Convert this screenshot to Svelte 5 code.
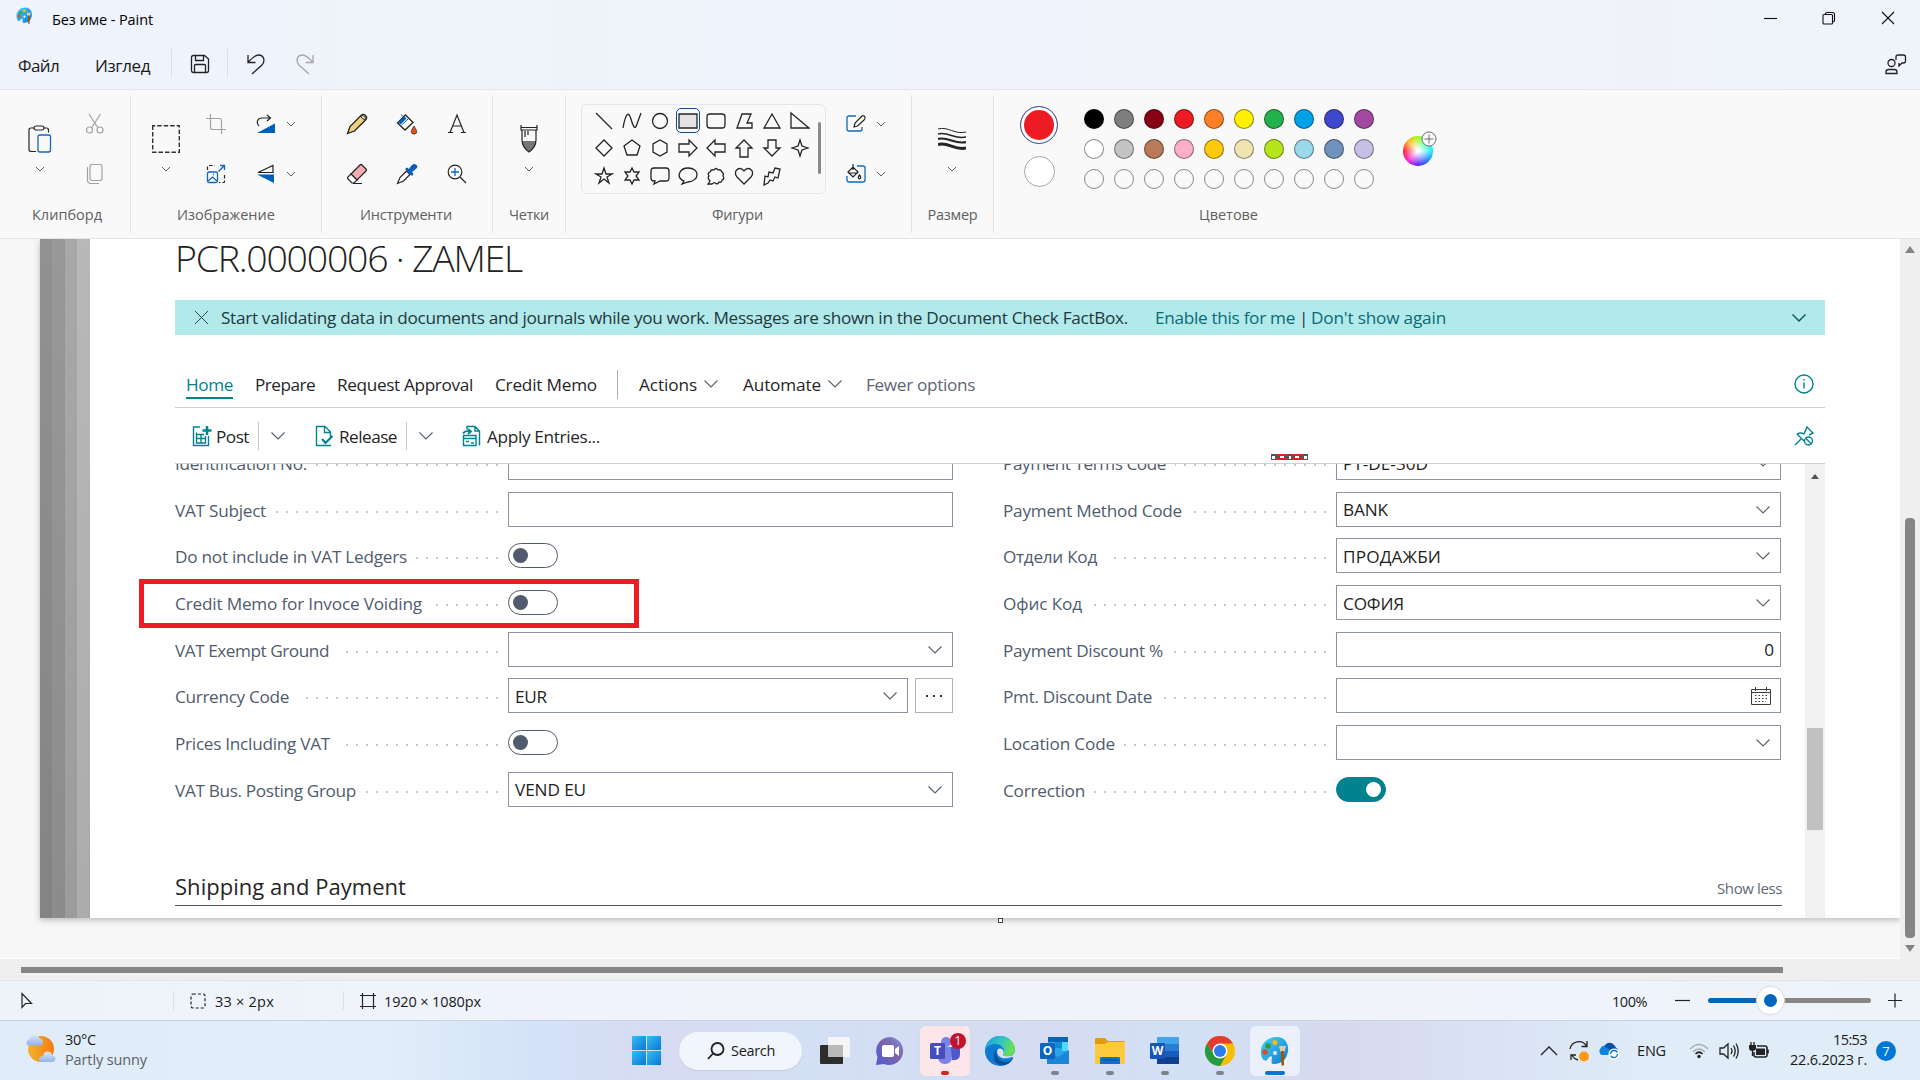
<script>
  // Spreads the letters of a text so that it takes the given width.
  function fit(node, width) {
    if (!width) return;
    const natural = node.getBoundingClientRect().width;
    node.style.letterSpacing = (width - natural) / node.textContent.length + 'px';
  }

  const shapes = [
    'M-8-8L8 8', 'M-9 7C-6-10-3-9-1-2S3 10 5 3L9-8', 'M0-7.5A7.5 7.5 0 1 1 0 7.5A7.5 7.5 0 1 1 0-7.5Z', 'M-9-7H9V7H-9Z',
    'M-6-7H6Q9-7 9-4V4Q9 7 6 7H-6Q-9 7-9 4V-4Q-9-7-6-7Z', 'M-7 7L-2-7H7L3 2H8V7Z', 'M0-7L8 7H-8Z', 'M-9-8L9 7H-9Z',
    'M0-8L8 0L0 8L-8 0Z', 'M0-8L8-2L5 7H-5L-8-2Z', 'M0-8L7-4V4L0 8L-7 4V-4Z', 'M-9-4H1V-8L9 0L1 8V4H-9Z',
    'M9-4H-1V-8L-9 0L-1 8V4H9Z', 'M-4 9V0H-8L0-8L8 0H4V9Z', 'M-4-8V0H-8L0 8L8 0H4V-8Z', 'M0-8L2-2L8 0L2 2L0 8L-2 2L-8 0L-2-2Z',
    'M0-8L2-2H8L3 1L5 7L0 3L-5 7L-3 1L-8-2H-2Z', 'M0-8L2-4H7L4 0L7 4H2L0 8L-2 4H-7L-4 0L-7-4H-2Z',
    'M-6-8H6Q9-8 9-5V2Q9 5 6 5H0L-6 8L-5 5H-6Q-9 5-9 2V-5Q-9-8-6-8Z', 'M-4 5C-13 1-8-8 0-8C12-8 12 5 0 6L-6 8Z',
    'M-6 5L-8 8H-4Q-2 6-1 7Q2 9 3 6Q6 7 6 4Q9 3 7 0Q8-3 6-4Q5-7 2-6Q0-9-2-6Q-5-7-6-4Q-9-3-7 0Q-9 2-6 5Z', 'M0 8L-7 1C-12-5-4-11 0-5C4-11 12-5 7 1Z',
    'M-8 9L-7 0L-4 1L-3-4L1-3L3-8L8-7L6 2L3 1L1 5L-2 4L-4 7Z'
  ];

  const swatches = [
    '#000000', '#7f7f7f', '#880015', '#ed1c24', '#ff7f27', '#fff200', '#22b14c', '#00a2e8', '#3f48cc', '#a349a4',
    '#ffffff', '#c3c3c3', '#b97a57', '#ffaec9', '#ffc90e', '#efe4b0', '#b5e61d', '#99d9ea', '#7092be', '#c8bfe7',
    '', '', '', '', '', '', '', '', '', ''
  ];

  const left = [
    { label: 'Identification No.', w: 132, kind: 'input' },
    { label: 'VAT Subject', w: 91, kind: 'input' },
    { label: 'Do not include in VAT Ledgers', w: 232, kind: 'off' },
    { label: 'Credit Memo for Invoce Voiding', w: 247, kind: 'off' },
    { label: 'VAT Exempt Ground', w: 154, kind: 'select' },
    { label: 'Currency Code', w: 114, kind: 'select', value: 'EUR', vw: 32, more: true },
    { label: 'Prices Including VAT', w: 155, kind: 'off' },
    { label: 'VAT Bus. Posting Group', w: 181, kind: 'select', value: 'VEND EU', vw: 71 }
  ];
  const right = [
    { label: 'Payment Terms Code', w: 163, kind: 'select', value: 'PT-DE-30D', vw: 85 },
    { label: 'Payment Method Code', w: 179, kind: 'select', value: 'BANK', vw: 45 },
    { label: 'Отдели Код', w: 94, kind: 'select', value: 'ПРОДАЖБИ', vw: 98 },
    { label: 'Офис Код', w: 79, kind: 'select', value: 'СОФИЯ', vw: 61 },
    { label: 'Payment Discount %', w: 160, kind: 'number', value: '0' },
    { label: 'Pmt. Discount Date', w: 149, kind: 'date' },
    { label: 'Location Code', w: 112, kind: 'select' },
    { label: 'Correction', w: 82, kind: 'on' }
  ];
</script>

{#snippet t(text, width)}<span class="t" use:fit={width}>{text}</span>{/snippet}

{#snippet chev(cls = '')}
  <svg class="chev {cls}" width="16" height="10" viewBox="0 0 16 10"><path d="M1.5 1.5L8 8L14.5 1.5" /></svg>
{/snippet}

{#snippet tiny()}
  <svg class="tiny" width="10" height="6" viewBox="0 0 10 6"><path d="M1 1L5 5L9 1" /></svg>
{/snippet}

{#snippet paint(size)}
  <svg width={size} height={size} viewBox="0 0 30 30">
    <defs><linearGradient id="pal" x1="0" y1="0" x2="1" y2="1"><stop offset="0" stop-color="#45d4fb" /><stop offset="1" stop-color="#0b78cf" /></linearGradient></defs>
    <path d="M1 17C0 7 8 1 17 1C25 1 29 8 28 15C27 23 22 28 14 28C10 28 12 24 12 21C11 19 9 21 7 24C4 26 1 22 1 17Z" fill="url(#pal)" />
    <circle cx="5" cy="16" r="2.7" fill="#dd4b20" /><circle cx="8" cy="10" r="2.7" fill="#2d9f30" /><circle cx="15" cy="6.500" r="2.600" fill="#f7b90a" /><circle cx="15" cy="17" r="2" fill="#e5f6fd" />
    <path d="M19 10H26L24.500 16H20.500Z" fill="#e3c9a5" stroke="none" /><path d="M21 15H24V29.500H21.500Z" fill="#9e560d" stroke="none" />
  </svg>
{/snippet}

{#snippet field(row)}
  <div class="row">
    <div class="label">{@render t(row.label, row.w)}<i class="dots"></i></div>
    <div class="control">
      {#if row.kind === 'off' || row.kind === 'on'}
        <span class="toggle {row.kind}"><b></b></span>
      {:else}
        <div class="box {row.kind}">
          {#if row.value}{@render t(row.value, row.vw)}{:else}<span></span>{/if}
          {#if row.kind === 'select'}{@render chev()}{/if}
          {#if row.kind === 'date'}
            <svg class="cal" width="20" height="20" viewBox="0 0 20 20"><path d="M.5 3.500H19.500V18.500H.5ZM.5 6.500H19.500M4.500 1V5M15.500 1V5" /><path d="M4 9.500H17M4 12.500H17M4 15.500H15" stroke-dasharray="1.500 2" /></svg>
          {/if}
        </div>
        {#if row.more}<div class="more"><i></i><i></i><i></i></div>{/if}
      {/if}
    </div>
  </div>
{/snippet}

<div class="screen">
  <header>
    <div class="titlebar">
      <span class="logo">{@render paint(17)}</span>
      <span class="title">{@render t('Без име - Paint', 101)}</span>
      <div class="wm">
        <svg width="14" height="14" viewBox="0 0 14 14"><path d="M1 7.500H14" /></svg>
        <svg width="14" height="14" viewBox="0 0 14 14"><path d="M1 4.500Q1 3.500 2 3.500H9.500Q10.500 3.500 10.500 4.500V12Q10.500 13 9.500 13H2Q1 13 1 12ZM3.500 3.500V2.500Q3.500 1.500 5 1.500H10.500Q12.500 1.500 12.500 3.500V9.500Q12.500 11 10.500 11" /></svg>
        <svg width="14" height="14" viewBox="0 0 14 14"><path d="M1 1L13 13M13 1L1 13" /></svg>
      </div>
    </div>
    <div class="menubar">
      <span class="m1">{@render t('Файл', 41)}</span>
      <span class="m2">{@render t('Изглед', 55)}</span>
      <i class="sep s1"></i>
      <svg width="20" height="20" viewBox="0 0 20 20"><path d="M3.500 1.500H14.500L18.500 5V16.500Q18.500 18.500 16.500 18.500H3.500Q1.500 18.500 1.500 16.500V3.500Q1.500 1.500 3.500 1.500ZM5.500 1.500V6.500H13.500V1.500M4.500 18V11.500Q4.500 10.500 5.500 10.500H14.500Q15.500 10.500 15.500 11.500V18" /></svg>
      <i class="sep s2"></i>
      <svg class="undo" width="20" height="22" viewBox="0 0 20 22"><path d="M2 2V9.500H9.500M2.500 9C6 5 9 2 12.500 2C18 2 19.500 8 16 12L6 21" /></svg>
      <svg class="redo" width="20" height="22" viewBox="0 0 20 22"><path d="M18 2V9.500H10.500M17.500 9C14 5 11 2 7.500 2C2 2 .500 8 4 12L14 21" /></svg>
      <svg class="share" width="22" height="22" viewBox="0 0 22 22"><circle cx="6.500" cy="10" r="3.500" /><path d="M1 20.500V19Q1 16.500 3.500 16.500H9.500Q12 16.500 12 19V20.500ZM11 7V4Q11 2 13 2H18.500Q20.500 2 20.500 4V8Q20.500 10 18.500 10H17L14 13V10" /></svg>
    </div>
  </header>

  <section class="ribbon">
    <div class="group g-clip">
      <div class="tools">
        <div class="tall">
          <svg width="24" height="28" viewBox="0 0 24 28"><path class="ink" d="M8 26.500H3Q1 26.500 1 24.500V5Q1 3 3 3H6M16 3H18.500Q20.500 3 20.500 5V7.500" /><rect class="ink" x="6" y="1" width="10" height="4" rx="2" /><rect class="blue" x="10" y="10" width="12.500" height="17" rx="2" /></svg>
          {@render tiny()}
        </div>
        <div class="grid one">
          <svg class="gray" width="20" height="20" viewBox="0 0 20 20"><circle cx="4.500" cy="16" r="3" /><circle cx="15" cy="16" r="3" /><path d="M4 0L13 14M15.500 0L6.500 14" /></svg>
          <svg class="gray" width="20" height="20" viewBox="0 0 20 20"><rect x="5" y=".500" width="12" height="16" rx="2" /><path d="M2.500 3V16Q2.500 19.500 6 19.500H14" /></svg>
        </div>
      </div>
      <div class="caption">{@render t('Клипборд', 70)}</div>
    </div>
    <div class="group g-image">
      <div class="tools">
        <div class="tall">
          <svg width="28" height="28" viewBox="0 0 28 28"><rect x=".7" y=".7" width="26.600" height="26.600" fill="none" stroke="#333" stroke-width="1.400" stroke-dasharray="4.500 2" stroke-dashoffset="2" /></svg>
          {@render tiny()}
        </div>
        <div class="grid one">
          <svg class="gray" width="20" height="20" viewBox="0 0 20 20"><path d="M4.500 0V13.500Q4.500 15.500 6.500 15.500H20M0 4.500H13.500Q15.500 4.500 15.500 6.500V20" /></svg>
          <svg width="20" height="20" viewBox="0 0 20 20"><path class="ink" d="M1.500 6V2.500Q1.500 1.500 2.500 1.500H9M18.500 11V17.500Q18.500 18.500 17.500 18.500H13" stroke-dasharray="3.500 2" /><rect class="blue" x="1.500" y="8" width="10" height="10.500" rx="1.500" /><path class="blue" d="M2 17L6.500 13L11 17M7 10.500H8M12.500 7.500L18.500 1.500M14 1.500H18.500V6" /></svg>
        </div>
        <div class="grid rot">
          <svg width="20" height="20" viewBox="0 0 20 20"><path class="ink" d="M3 12C0 9 1 4 6 4H14M11 1L14.500 4L11 7" /><path d="M1 19L19 9.500V19Z" fill="#005fb8" /></svg>{@render tiny()}
          <svg width="20" height="20" viewBox="0 0 20 20"><path class="ink" d="M2 8.500L17 1.500V8.500Z" /><path d="M1 10.500H18V19Z" fill="#005fb8" /></svg>{@render tiny()}
        </div>
      </div>
      <div class="caption">{@render t('Изображение', 98)}</div>
    </div>
    <div class="group g-tools">
      <div class="tools">
        <div class="grid three">
          <svg width="22" height="22" viewBox="0 0 22 22"><path d="M1.500 20.500L4 13.500L15.500 2Q17.500 .500 19.500 2.500T20 6.500L8.500 18Z" fill="#f2cf7c" stroke="#222" stroke-width="1.300" /><path d="M14.500 3.500L17 2.500L19.500 5L18.500 7Z" fill="#fff" stroke="#222" /></svg>
          <svg width="22" height="22" viewBox="0 0 22 22"><path d="M1.500 10L9.500 2L17 9.500L9 17Z" fill="#fff" stroke="#222" stroke-width="1.300" /><path d="M2 9L8 3L10.500 5.500L4.500 11.500Z" fill="#005fb8" /><path d="M5.500 12L12 6M5 1.500L9 5" stroke="#005fb8" fill="none" /><path d="M18 13Q14.500 18 15.500 20Q18 22.500 20.500 20Q21.500 18 18 13Z" fill="#e8511f" stroke="#222" stroke-width=".700" /></svg>
          <svg width="22" height="22" viewBox="0 0 22 22"><path class="ink" d="M4 19.500L11 2L18 19.500M6.500 13H15.500M2 19.500H7M15 19.500H20" stroke-width="1.600" /></svg>
          <svg width="22" height="22" viewBox="0 0 22 22"><path d="M5 11L14 2Q15 1 16 2L20 6Q21 7 20 8L11 17Z" fill="#f8aeb0" stroke="#222" stroke-width="1.200" /><path d="M5 11L2 14Q1 15 2 16L6 20H8L11 17ZM7 20.500H16" fill="#fff" stroke="#222" stroke-width="1.200" /></svg>
          <svg width="22" height="22" viewBox="0 0 22 22"><path d="M10.500 8L4 14.500L1.500 20.500L7.500 18L14 11.500Z" fill="#fff" stroke="#222" stroke-width="1.200" /><path d="M9 6L11 4.500L13 6L15 3Q18-.500 20.500 2T18.500 7L16 9L17.500 11L16 13Z" fill="#005fb8" /></svg>
          <svg width="22" height="22" viewBox="0 0 22 22"><circle class="ink" cx="9" cy="9" r="6.800" /><path class="ink" d="M14 14L20 20" /><path class="blue" d="M9 5V13M5 9H13" /></svg>
        </div>
      </div>
      <div class="caption">{@render t('Инструменти', 92)}</div>
    </div>
    <div class="group g-brush">
      <div class="tools">
        <div class="tall">
          <svg width="18" height="28" viewBox="0 0 18 28"><path d="M2 16L16 16Q16 22 9 27Q2 22 2 16Z" fill="#777" /><path class="ink" d="M1 0V5H17V0M1 2.500H17M2 5V15Q2 22 9 27Q16 22 16 15V5M5 6V12M8 6V10" /></svg>
          {@render tiny()}
        </div>
      </div>
      <div class="caption">{@render t('Четки', 40)}</div>
    </div>
    <div class="group g-shapes">
      <div class="tools">
        <div class="gallery">
          <div class="shapes">
            {#each shapes as d, i}
              <span class:picked={i === 3}><svg width="20" height="20" viewBox="-10 -10 20 20"><path {d} /></svg></span>
            {/each}
          </div>
          <i class="thumb"></i>
        </div>
        <div class="grid fillcol">
          <svg width="22" height="20" viewBox="0 0 22 20"><path class="blue" d="M11 2H4Q2 2 2 4V15Q2 17 4 17H15Q17 17 17 15V13" /><path class="ink" d="M9 13L10 9L17 2Q19 1 20 3Q20.500 4.500 19 6L12.500 12Z" /></svg>{@render tiny()}
          <svg width="22" height="20" viewBox="0 0 22 20"><path class="blue" d="M12 2H18Q20 2 20 4V16Q20 18 18 18H4Q2 18 2 16V12" /><path class="ink" d="M3 8L8 3L13 8L8 13ZM8 0V6M3 9H13M14.500 11Q12 14 14.500 15Q17 14 14.500 11Z" /></svg>{@render tiny()}
        </div>
      </div>
      <div class="caption">{@render t('Фигури', 51)}</div>
    </div>
    <div class="group g-size">
      <div class="tools">
        <div class="tall">
          <svg width="28" height="28" viewBox="0 0 28 28"><path d="M0 4C10 1 17 10 28 7" stroke-width="1" /><path d="M0 9C10 6 17 15 28 12" stroke-width="1.600" /><path d="M0 14C10 11 17 20 28 17" stroke-width="2.200" /><path d="M0 19.500C10 16.500 17 26 28 23" stroke-width="3" /></svg>
          {@render tiny()}
        </div>
      </div>
      <div class="caption">{@render t('Размер', 50)}</div>
    </div>
    <div class="group g-colours">
      <div class="tools">
        <div class="active"><span class="primary"></span><span class="secondary"></span></div>
        <div class="swatches">
          {#each swatches as c}<i style:background={c}></i>{/each}
        </div>
        <div class="wheel"><svg width="16" height="16" viewBox="0 0 16 16"><circle cx="8" cy="8" r="7" /><path d="M8 3.500V12.500M3.500 8H12.500" /></svg></div>
      </div>
      <div class="caption">{@render t('Цветове', 59)}</div>
    </div>
  </section>

  <main>
    <div class="stage">
      <div class="canvas">
        <div class="stripes"><i></i><i></i><i></i><i></i></div>
        <div class="page">
          <h1>{@render t('PCR.0000006 · ZAMEL', 347)}</h1>
          <div class="banner">
            <svg width="15" height="15" viewBox="0 0 15 15"><path d="M1 1L14 14M14 1L1 14" /></svg>
            <span class="msg">{@render t('Start validating data in documents and journals while you work. Messages are shown in the Document Check FactBox.', 907)}</span>
            <a>{@render t('Enable this for me', 140)}</a><span class="bar">|</span><a>{@render t("Don't show again", 135)}</a>
            {@render chev('end')}
          </div>
          <nav>
            <span class="active-tab">{@render t('Home', 47)}</span>
            <span class="n2">{@render t('Prepare', 60)}</span>
            <span class="n3">{@render t('Request Approval', 136)}</span>
            <span class="n3">{@render t('Credit Memo', 102)}</span>
            <i class="nsep"></i>
            <span class="n4">{@render t('Actions', 58)}</span>{@render chev()}
            <span class="n5">{@render t('Automate', 78)}</span>{@render chev()}
            <span class="n6">{@render t('Fewer options', 109)}</span>
            <svg class="teal info" width="22" height="22" viewBox="0 0 22 22"><circle cx="11" cy="11" r="9" /><path d="M11 9.500V15.500M11 6V7.500" /></svg>
          </nav>
          <div class="actions">
            <svg class="teal" width="20" height="22" viewBox="0 0 20 22"><path d="M8 2H1.500V20.500H16.500V11M4.500 7.500V18H13.500V11M4.500 9.500H12M4.500 13.500H13.500M9 10V18" /><path d="M15 1V10M10.500 5.500H19.500" stroke-width="2.500" /></svg>
            <span class="a1">{@render t('Post', 33)}</span><i class="asep"></i>{@render chev()}
            <svg class="teal a2" width="20" height="22" viewBox="0 0 20 22"><path d="M16 20.500H1.500V1.500H10L15.500 7V12M9.500 1.500V7.500H15.500" /><path d="M7 14L10.500 18L17.500 11" stroke-width="2.200" /></svg>
            <span class="a3">{@render t('Release', 58)}</span><i class="asep"></i>{@render chev()}
            <svg class="teal a4" width="20" height="22" viewBox="0 0 20 22"><path d="M5 4.500V1.500H13L17.500 6V20.500M13 1.500V6H17.500M1.500 10.500H14V20.500H1.500ZM1.500 13.500H14M4 16.500H7M9 18H12" /><path d="M1 8.500Q3 5 8 6.500M6 4L9 6.500L6 9" stroke-width="1.800" /></svg>
            <span class="a5">{@render t('Apply Entries...', 113)}</span>
            <svg class="teal pin" width="22" height="22" viewBox="0 0 22 22"><path d="M2 20L8 14M4 9Q8 7 11 9L14 2L20 8L16 10M4 9L11 16" /><circle cx="15.500" cy="16" r="4" /><path d="M12.500 13L18.500 19" /></svg>
          </div>
          <div class="scroller">
            <div class="form">
              <div class="cols">
                <div class="col">{#each left as row}{@render field(row)}{/each}</div>
                <div class="col">{#each right as row}{@render field(row)}{/each}</div>
              </div>
              <div class="fasttab">
                <h2>{@render t('Shipping and Payment', 231)}</h2>
                <div class="less">{@render t('Show less', 65)}</div>
              </div>
            </div>
            <div class="inner-scroll"><b></b><i></i></div>
          </div>
        </div>
        <div class="mark"></div>
        <svg class="selection" width="37" height="6" viewBox="0 0 37 6">
          <path d="M0 0H37V6H0Z" fill="#555" /><path d="M5 0H16V2H5ZM21 0H32V2H21ZM5 4H16V6H5ZM21 4H32V6H21Z" fill="#ed1c24" />
          <path d="M1 2H4V5H1ZM9 2H13V4H9ZM18 2H20V5H18ZM24 2H28V4H24ZM33 2H36V5H33Z" fill="#fff" />
        </svg>
      </div>
      <i class="handle"></i>
    </div>
    <div class="vscroll"><b></b><i></i><u></u></div>
  </main>
  <div class="hscroll"><i></i></div>

  <footer>
    <svg class="cur" width="14" height="18" viewBox="0 0 14 18"><path d="M2 1.500V15.500L5.500 11.500H11.500Z" /></svg>
    <i class="sep f1"></i>
    <svg width="16" height="16" viewBox="0 0 16 16"><rect x="1" y="1" width="14" height="14" rx="2" stroke-dasharray="3 2" /></svg>
    <span class="f2">{@render t('33 × 2px', 59)}</span>
    <i class="sep f3"></i>
    <svg width="16" height="16" viewBox="0 0 16 16"><path d="M2.500 0V16M13.500 0V16M0 2.500H16M0 13.500H16" /></svg>
    <span class="f4">{@render t('1920 × 1080px', 97)}</span>
    <span class="zoom">{@render t('100%', 35)}</span>
    <svg width="16" height="16" viewBox="0 0 16 16"><path d="M0 7.500H15" /></svg>
    <div class="slider"><i></i><b></b></div>
    <svg width="16" height="16" viewBox="0 0 16 16"><path d="M1 7.500H15M8 .500V14.500" /></svg>
  </footer>

  <div class="taskbar">
    <div class="weather">
      <svg width="30" height="30" viewBox="0 0 30 30">
        <defs><linearGradient id="sun" x1="0" x2="1"><stop offset="0" stop-color="#f5b32c" /><stop offset="1" stop-color="#f47a12" /></linearGradient><linearGradient id="cl" x2="0" y2="1"><stop offset="0" stop-color="#d9e7fb" /><stop offset="1" stop-color="#93b4ee" /></linearGradient></defs>
        <circle cx="15" cy="16" r="13" fill="url(#sun)" />
        <path d="M3 12.500Q0 12 .500 9T4 6Q5 1 9 1.500T13 5Q17 6 17 9T14 12.500Z" fill="url(#cl)" /><path d="M16 29Q12.500 28 13 25.500T17 23Q18 18 22 18.500T26 22Q30 23 29.500 26T26 29Z" fill="url(#cl)" />
      </svg>
      <div class="two"><span>{@render t('30°C', 31)}</span><em>{@render t('Partly sunny', 82)}</em></div>
    </div>
    <div class="dock">
      <span class="win"><i></i><i></i><i></i><i></i></span>
      <div class="search"><svg width="18" height="18" viewBox="0 0 18 18"><circle cx="10.500" cy="7" r="6" /><path d="M6 11.500L1 17" /></svg>{@render t('Search', 44)}</div>
      <span class="app"><svg width="30" height="30" viewBox="0 0 30 30"><rect x="0" y="9" width="23" height="19" rx="1" fill="#2d2d2c" /><rect x="8" y="1" width="22" height="20" rx="1" fill="#f5f5f5" /><rect x="8" y="9" width="15" height="12" fill="#b9b9b9" /></svg></span>
      <span class="app"><svg width="30" height="30" viewBox="0 0 30 30"><defs><linearGradient id="chat" x1="1" x2="0" y2="1"><stop offset="0" stop-color="#7b94e8" /><stop offset=".400" stop-color="#8065a8" /><stop offset="1" stop-color="#5059d8" /></linearGradient></defs><path d="M15 1A14 14 0 1 1 9 28L1 29L2.500 21A14 14 0 0 1 15 1Z" fill="url(#chat)" /><rect x="7" y="9" width="12" height="12" rx="2" fill="#fff" /><path d="M20 13L24 10V20L20 17Z" fill="#fff" /></svg></span>
      <span class="app tile red"><svg width="30" height="30" viewBox="0 0 30 30"><circle cx="16" cy="6" r="5" fill="#7b83eb" /><path d="M8 11H22V20Q22 28 15 28T8 20Z" fill="#7b83eb" /><path d="M21 11H30V18Q30 25 22 24Z" fill="#5059c9" /><rect y="7" width="15" height="16" rx="1.500" fill="#464eb8" /></svg><b class="tl">T</b><b class="badge">1</b><i class="run rr"></i></span>
      <span class="app"><svg width="30" height="30" viewBox="0 0 30 30"><defs><linearGradient id="eg" x2="1" y2=".300"><stop offset="0" stop-color="#1a9fde" /><stop offset=".600" stop-color="#35c7c0" /><stop offset="1" stop-color="#67e052" /></linearGradient></defs><circle cx="15" cy="15" r="15" fill="#0d7bd2" /><path d="M0 14C1 5 8 0 15 0C24 0 30 7 30 13C30 19 25 21 20 20C16 19 19 18 19 15C19 11 15 8 10 8C5 8 1 11 0 14Z" fill="url(#eg)" /><path d="M12 13C9 19 14 26 21 26Q25 26 28 22C24 32 11 31 9 23Q8 16 12 13Z" fill="#0f4f98" /><path d="M12 15C12 22 19 24 27 21Q29 20.500 28 22L30 24V15C29 20 24 21 20 20Q17 19.500 18.500 17.500C20 13 13 10 12 15Z" fill="#d8e0f4" /></svg></span>
      <span class="app"><svg width="30" height="30" viewBox="0 0 30 30"><path d="M8 2H28V28H8Z" fill="#28a8ea" /><path d="M8 1H28V6H8Z" fill="#0364b8" /><path d="M15 6H22V12H15Z" fill="#0f8bd6" /><path d="M22 6H28V15H22Z" fill="#50d9ff" /><path d="M7 15L18 21L29 14V28H7Z" fill="#1a86d8" /><rect y="7" width="15" height="16" rx="1" fill="#0f65bd" /></svg><b class="tl">O</b><i class="run"></i></span>
      <span class="app"><svg width="30" height="30" viewBox="0 0 30 30"><path d="M0 3Q0 2 1 2H10L13 5H29Q30 5 30 6V10H0Z" fill="#e09c0c" /><path d="M0 8H10L13 6H30V28H0Z" fill="#fdca3d" /><path d="M5 28V22Q5 21 7 21H23Q25 21 25 22V28Z" fill="#1270bd" /><path d="M8 24H22" stroke="#0b4a84" /></svg><i class="run"></i></span>
      <span class="app"><svg width="30" height="30" viewBox="0 0 30 30"><path d="M7 1H29V8H7Z" fill="#41a5ee" /><path d="M7 8H29V15H7Z" fill="#2b7cd3" /><path d="M7 15H29V21H7Z" fill="#185abd" /><path d="M7 21H29V28H7Z" fill="#103f91" /><rect y="7" width="15" height="16" rx="1" fill="#1855b8" /></svg><b class="tl">W</b><i class="run"></i></span>
      <span class="app"><svg width="30" height="30" viewBox="0 0 30 30"><circle cx="15" cy="15" r="15" fill="#fbbc05" /><path d="M2 7.500A15 15 0 0 1 28 7.500H15L9 19Z" fill="#e33b2e" /><path d="M2 7.500A15 15 0 0 0 15 30L21.500 18.500L9 19Z" fill="#249a41" /><circle cx="15" cy="15" r="7.500" fill="#fff" /><circle cx="15" cy="15" r="6" fill="#2f7cee" /></svg><i class="run"></i></span>
      <span class="app tile">{@render paint(30)}<i class="run rb"></i></span>
    </div>
    <div class="tray">
      <svg width="18" height="10" viewBox="0 0 18 10"><path d="M1 9L9 1L17 9" /></svg>
      <svg class="y1" width="22" height="22" viewBox="0 0 22 22"><path d="M2 9A9 9 0 0 1 18.500 6M19 1V6.500H13.500M3 20V15H8M4 15.500Q6 19 10 20" /><circle cx="16" cy="16.500" r="5" fill="#ff9a0f" stroke="none" /></svg>
      <svg class="y2" width="22" height="18" viewBox="0 0 22 18"><path d="M3 13Q-1 11 1 7T6 4Q10-2 15 3Q17 6 19 7L15 13Z" fill="#1083da" stroke="none" /><path d="M5 4Q10-2 15 3L17 6L11 8Z" fill="#0a4fa8" stroke="none" /><circle cx="15" cy="12" r="5.500" fill="#fff" stroke="none" /><path d="M11.500 12Q12 8.500 15 8.500T18 10.500M18.500 12Q18 15.500 15 15.500T12 13.500" stroke="#1070c8" /></svg>
      <span class="lang">{@render t('ENG', 29)}</span>
      <svg class="y3" width="20" height="16" viewBox="0 0 20 16"><path d="M1 6Q10-3 19 6M4 9Q10 3 16 9" stroke="#a6adb5" /><path d="M6.500 11Q10 7.500 13.500 11" stroke-width="1.700" /><circle cx="10" cy="13.500" r="1.700" fill="#222" stroke="none" /></svg>
      <svg class="y4" width="20" height="18" viewBox="0 0 20 18"><path d="M1 6V12H4.500L9 16V2L4.500 6ZM12 6Q14 9 12 12M14.500 3.500Q18 9 14.500 14.500M17 1.500Q21.500 9 17 16.500" /></svg>
      <svg class="y5" width="20" height="18" viewBox="0 0 20 18"><path d="M8 4H16Q18 4 18 6V13Q18 15 16 15H7Q5 15 5 13V10M19 7.500V11.500" stroke-width="1.600" /><path d="M7 6.500H16V13H7Z" fill="#222" stroke="none" /><path d="M0 3H7V7Q6 9 3.500 9Q0 9 0 6Z" fill="#222" stroke="none" /><path d="M2 0V3M5 0V3M3.500 9V14" /></svg>
      <div class="clock">{@render t('15:53', 34)}{@render t('22.6.2023 г.', 77)}</div>
      <b class="count">7</b>
    </div>
  </div>
</div>

<style>
  :global(body) { overflow: hidden; }
  .screen { width: 1920px; height: 1080px; font-family: 'Open Sans', 'Noto Sans', sans-serif; font-size: 15px; color: #1b1b1b; display: flex; flex-direction: column; overflow: hidden; }
  .screen :global(*) { box-sizing: border-box; }
  svg { flex: none; display: block; fill: none; }
  .t { display: inline-block; white-space: nowrap; }
  .ink { stroke: #242424; stroke-width: 1.2; }
  .blue { stroke: #1268bd; stroke-width: 1.3; }
  .gray { stroke: #a2a2a2; stroke-width: 1.2; }
  .tiny { stroke: #5c5c5c; }
  .chev { stroke: #55606a; stroke-width: 1.1; }

  header { height: 90px; flex: none; background: linear-gradient(90deg, #eff3fb 0 14%, #eef4f8 20%, #eff3fb 40%, #f1f3fa 70%, #eef4f9); border-bottom: 1px solid #e5e7ea; }
  .titlebar { height: 38px; display: flex; }
  .logo { padding: 7px 0 0 16px; width: 52px; }
  .title { line-height: 40px; font-size: 14.5px; color: #000; }
  .wm { margin-left: auto; display: flex; gap: 45px; padding: 11px 25px 0 0; stroke: #111; stroke-width: 1.1; }
  .menubar { height: 51px; display: flex; align-items: center; font-size: 17px; stroke: #222; stroke-width: 1.3; }
  .menubar .t, .t { stroke: none; }
  .m1 { margin-left: 18px; width: 77px; padding-top: 3px; }
  .m2 { width: 76px; padding-top: 3px; }
  .sep { width: 1px; height: 29px; background: #dcdfe4; }
  .s1 { margin-right: 18px; }
  .s2 { margin: 0 18px 0 17px; }
  .redo { margin-left: 29px; stroke: #a5a7ac; }
  .share { margin: 0 13px 0 auto; }

  .ribbon { height: 149px; flex: none; background: #f9f9f9; border-bottom: 1px solid #e5e5e5; display: flex; padding-top: 5px; }
  .group { height: 138px; border-right: 1px solid #e2e2e2; display: flex; flex-direction: column; }
  .tools { height: 106px; padding-top: 4px; display: flex; }
  .caption { line-height: 28px; text-align: center; color: #606060; font-size: 14.5px; }
  .tall { width: 50px; display: flex; flex-direction: column; align-items: center; padding-top: 26px; gap: 13px; }
  .grid { display: grid; grid-auto-rows: 50px; align-items: center; justify-items: center; height: 100px; }
  .one { grid-template-columns: 50px; }
  .three { grid-template-columns: repeat(3, 50px); }
  .rot { grid-template-columns: 30px 20px; margin-left: 10px; }
  .g-clip { width: 131px; padding: 0 9px 0 15px; }
  .g-clip .grid { margin-left: 5px; }
  .g-clip .caption, .g-image .caption, .g-tools .caption, .g-shapes .caption { text-align: left; }
  .g-clip .caption { padding-left: 17px; }
  .g-image { width: 191px; padding-left: 10px; }
  .g-image .caption { padding-left: 36px; }
  .g-tools { width: 171px; padding-left: 10px; }
  .g-tools .caption { padding-left: 28px; }
  .g-brush { width: 73px; padding-left: 11px; }
  .g-brush .caption { text-align: left; padding-left: 5px; }
  .g-shapes { width: 346px; padding-left: 15px; }
  .g-shapes .caption { padding-left: 131px; }
  .gallery { width: 245px; height: 90px; margin-top: 5px; border: 1px solid #e6e6e6; border-radius: 6px; display: flex; padding: 2px 0 0 8px; }
  .shapes { width: 228px; display: grid; grid-template-columns: repeat(8, 28px); grid-auto-rows: 27.6px; stroke: #242424; stroke-width: 1.3; }
  .shapes span { display: grid; place-items: center; }
  .shapes .picked { width: 24px; height: 25px; border: 1px solid #0a4c9c; border-radius: 5px; place-self: center; }
  .picked svg { fill: #e4e4e4; }
  .thumb { width: 3px; height: 52px; background: #8a8a8a; border-radius: 2px; margin-top: 15px; }
  .fillcol { grid-template-columns: 30px 20px; margin-left: 15px; }
  .g-size { width: 82px; }
  .g-size .tall { width: 80px; stroke: #242424; }
  .g-colours { border: 0; padding-left: 26px; }
  .g-colours .caption { text-align: left; padding-left: 179px; }
  .active { width: 38px; display: flex; flex-direction: column; align-items: center; padding-top: 7px; gap: 12px; }
  .primary { width: 38px; height: 38px; border: 1.5px solid #2e65a6; border-radius: 50%; background: #ed1c24; box-shadow: inset 0 0 0 3px #fff; }
  .secondary { width: 31px; height: 31px; border: 1.5px solid #a8a8a8; border-radius: 50%; background: #fff; }
  .swatches { display: grid; grid-template-columns: repeat(10, 30px); grid-auto-rows: 30px; margin: 5px 0 0 21px; place-items: center; }
  .swatches i { width: 20px; height: 20px; border-radius: 50%; border: 1px solid rgba(0, 0, 0, 0.45); }
  .wheel { width: 30px; height: 30px; margin: 37px 0 0 24px; border-radius: 50%; background: radial-gradient(circle, #fff 5%, #fff0 75%), conic-gradient(#9f0, #0f8, #0ef 25%, #06f, #40f 50%, #f0c, #f02 75%, #fa0, #9f0); }
  .wheel svg { margin: -5px 0 0 18px; stroke: #707070; fill: #f9f9f9; }

  main { height: 720px; flex: none; display: flex; background: #f7f7f7; }
  .stage { width: 1900px; position: relative; padding-left: 40px; border-bottom: 1px solid #fff; }
  .canvas { width: 1860px; height: 679px; background: #fff; display: flex; position: relative; box-shadow: 0 2px 6px rgba(0, 0, 0, 0.25); clip-path: inset(0 0 -10px -6px); }
  .stripes { width: 50px; display: grid; grid-template-columns: 12px 13px 12px 13px; }
  .stripes i { background: linear-gradient(100deg, #929292, #838383); }
  .stripes i:nth-child(2) { background: linear-gradient(100deg, #999, #8b8b8b); }
  .stripes i:nth-child(3) { background: linear-gradient(100deg, #a9a9a9, #9b9b9b); }
  .stripes i:nth-child(4) { background: linear-gradient(100deg, #b9b9b9, #ababab); }
  .page { margin-left: 85px; width: 1650px; display: flex; flex-direction: column; font-size: 17.2px; color: #262626; }
  h1 { margin: 0; height: 61px; font-size: 37.5px; font-weight: 300; line-height: 38px; color: #222; }
  .banner { height: 35px; background: #b2e9eb; display: flex; align-items: center; padding-left: 19px; color: #22383c; flex: none; }
  .banner svg { stroke: #30484c; }
  .banner .msg { margin: 0 27px 0 12px; }
  .banner a { color: #0a6b73; }
  .bar { margin: 0 6px 0 4px; width: 6px; }
  .banner .end { margin: 0 18px 0 auto; stroke: #0c5b62; stroke-width: 1.5; }
  nav { height: 73px; border-bottom: 1px solid #cdd1d4; display: flex; padding: 26px 0 0 11px; align-items: center; flex: none; }
  nav > span { height: 27px; line-height: 27px; }
  .active-tab { color: #00838f; box-shadow: 0 1px #00838f; border-bottom: 1px solid #00838f; height: 27px; }
  .n2 { margin-left: 22px; }
  .n3 { margin-left: 22px; }
  .nsep { width: 1px; height: 29px; background: #a8adb1; margin: 0 21px 0 20px; }
  .n4, .n5 { margin-right: 6px; }
  .n5 { margin-left: 24px; }
  .n6 { margin-left: 23px; color: #5d6673; }
  .teal { stroke: #00838f; stroke-width: 1.4; }
  .info, .pin { margin: 0 10px 0 auto; }
  .actions { height: 56px; border-bottom: 1px solid #cdd1d4; display: flex; align-items: center; padding-left: 17px; flex: none; }
  .actions span { padding-top: 1px; }
  .a1, .a3 { margin-left: 4px; }
  .a5 { margin-left: 5px; }
  .asep { width: 1px; height: 28px; background: #c4c8cb; margin: 0 11px 0 9px; }
  .a2 { margin-left: 29px; }
  .a4 { margin-left: 28px; }
  .scroller { flex: 1; display: flex; min-height: 0; overflow: hidden; }
  .form { width: 1629px; overflow: hidden; }
  .cols { margin-top: -19px; display: flex; gap: 50px; height: 415px; }
  .col { width: 778px; display: flex; flex-direction: column; gap: 11.7px; }
  .row { height: 35px; display: flex; flex: none; }
  .label { width: 333px; display: flex; align-items: center; color: #505c6d; padding-top: 2px; }
  .dots { flex: 1; height: 2px; margin: 3px 10px 0 9px; background: radial-gradient(circle at 9px 1px, #c5c9cd 1px, #fff0 1.5px) right top / 10px 2px repeat-x; }
  .control { width: 445px; display: flex; gap: 7px; }
  .box { flex: 1; border: 1px solid #8a94a0; display: flex; align-items: center; justify-content: space-between; padding: 1px 9px 0 6px; color: #1e1e1e; }
  .number { justify-content: flex-end; padding-right: 6px; }
  .cal { stroke: #3e3e3e; }
  .more { width: 38px; border: 1px solid #b0b4b8; display: flex; align-items: center; justify-content: center; gap: 5px; }
  .more i { width: 2px; height: 2px; background: #333; }
  .toggle { width: 50px; height: 25px; margin-top: 5px; border: 1px solid #505c6d; border-radius: 13px; padding: 4px; display: flex; }
  .toggle b { width: 15px; height: 15px; border-radius: 50%; background: #505c6d; }
  .toggle.on { background: #00838f; border-color: #00838f; justify-content: flex-end; }
  .on b { background: #fff; }
  .fasttab { width: 1607px; height: 46px; border-bottom: 1px solid #4f5664; display: flex; justify-content: space-between; align-items: flex-end; }
  h2 { margin: 0; font-size: 22px; font-weight: 500; line-height: 37px; }
  .less { color: #606a78; font-size: 15px; line-height: 33px; }
  .inner-scroll { width: 20px; margin-left: 1px; background: #f1f1f1; padding: 10px 2px 0; }
  .inner-scroll b { display: block; width: 0; margin: 0 auto; border: 4.5px solid transparent; border-top: 0; border-bottom: 5px solid #505050; }
  .inner-scroll i { display: block; height: 102px; margin-top: 249px; background: #c1c1c1; }
  .mark { position: absolute; left: 99px; top: 340px; width: 500px; height: 49px; border: 5px solid #ed1c24; }
  .selection { position: absolute; left: 1231px; top: 215px; }
  .handle { position: absolute; left: 998px; top: 679px; width: 5px; height: 5px; border: 1px solid #444; background: #fff; }
  .vscroll { width: 20px; background: #efefef; padding-top: 7px; display: flex; flex-direction: column; align-items: center; }
  .vscroll b { border: 5px solid transparent; border-top: 0; border-bottom: 7px solid #858585; }
  .vscroll i { width: 10px; height: 420px; background: #858585; border-radius: 4px; margin-top: 265px; }
  .vscroll u { border: 5px solid transparent; border-bottom: 0; border-top: 7px solid #858585; margin-top: 7px; }
  .hscroll { height: 21px; flex: none; background: #efefef; padding: 8px 0 0 21px; }
  .hscroll i { display: block; width: 1762px; height: 6px; background: #858585; }

  footer { height: 40px; flex: none; display: flex; align-items: center; background: linear-gradient(90deg, #edf4f9, #f0f3fb 30%, #f1f3f9 60%, #eff3fb 84%, #edf4f8); border-top: 1px solid #e4e6e9; stroke: #222; stroke-width: 1.2; font-size: 14.5px; padding-left: 20px; }
  footer .sep { height: 19px; }
  footer span { padding-top: 1px; }
  .f1 { margin: 0 16px 0 139px; }
  .f2 { margin-left: 9px; }
  .f3 { margin: 0 16px 0 69px; }
  .f4 { margin-left: 8px; }
  .zoom { margin: 0 28px 0 auto; }
  .slider { position: relative; width: 163px; height: 5px; border-radius: 3px; background: linear-gradient(90deg, #0067c0 0 62px, #868686 62px); margin: 0 16px 0 17px; }
  .slider b { position: absolute; left: 49px; top: -11px; width: 27px; height: 27px; border-radius: 50%; border: 7px solid #fff; background: #0067c0; box-shadow: 0 0 1px 1px #ddd; }
  footer > svg:last-child { margin-right: 17px; }

  .taskbar { height: 60px; flex: none; display: flex; align-items: center; position: relative; background: linear-gradient(90deg, #e0edf8, #e1edf8 20%, #d4e2f9 28%, #d6dbf2 35%, #d3dff5 42%, #d5dcf1 55%, #d2e0f6 62%, #d6daec 70%, #dbe5f5 80%, #e0ecf7 86%); border-top: 1px solid #cbd3e2; }
  .weather { display: flex; gap: 9px; padding-left: 26px; width: 632px; }
  .two { display: flex; flex-direction: column; font-size: 14.5px; line-height: 20px; margin: -3px 0 -2px; }
  em { font-style: normal; color: #5c6168; }
  .dock { display: flex; align-items: center; }
  .win { width: 29px; height: 29px; display: grid; grid-template-columns: 14px 14px; gap: 1px; }
  .win i { background: linear-gradient(135deg, #36bdf7, #0878d4); }
  .search { width: 123px; height: 38px; border-radius: 19px; background: #f1f5fc; margin: 0 8px 0 18px; display: flex; align-items: center; gap: 6px; padding-left: 28px; stroke: #222; stroke-width: 1.8; font-size: 14.5px; box-shadow: 0 1px 1px #c3cce0; }
  .app { width: 50px; height: 50px; margin-right: 5px; position: relative; display: grid; place-items: center; }
  .tile { background: #ebf0fa; border-radius: 5px; box-shadow: 0 0 1px #b8c1d2; }
  .tile.red { background: #fce6e9; }
  .tl { position: absolute; left: 10px; top: 17px; width: 15px; height: 16px; font-size: 12px; line-height: 16px; color: #fff; text-align: center; }
  .badge { position: absolute; left: 30px; top: 7px; width: 16px; height: 16px; border-radius: 50%; background: #c4122f; color: #fff; font-size: 12px; line-height: 16px; text-align: center; font-weight: 400; }
  .run { position: absolute; left: 21px; bottom: 1px; width: 8px; height: 4px; border-radius: 2px; background: #7e828c; }
  .rr { background: #c42b1c; }
  .rb { left: 15px; width: 20px; background: #0078d4; }
  .tray { margin-left: auto; display: flex; align-items: center; stroke: #222; stroke-width: 1.3; font-size: 14.5px; padding-right: 24px; }
  .y1 { margin-left: 10px; }
  .y2 { margin-left: 9px; }
  .lang { margin-left: 16px; }
  .y3 { margin-left: 23px; }
  .y4, .y5 { margin-left: 10px; }
  .clock { display: flex; flex-direction: column; align-items: flex-end; line-height: 20px; margin: -2px 0 0 21px; }
  .count { width: 20px; height: 20px; border-radius: 50%; background: #0078d4; color: #fff; font-weight: 400; font-size: 13px; line-height: 20px; text-align: center; margin-left: 9px; stroke: none; }
</style>
